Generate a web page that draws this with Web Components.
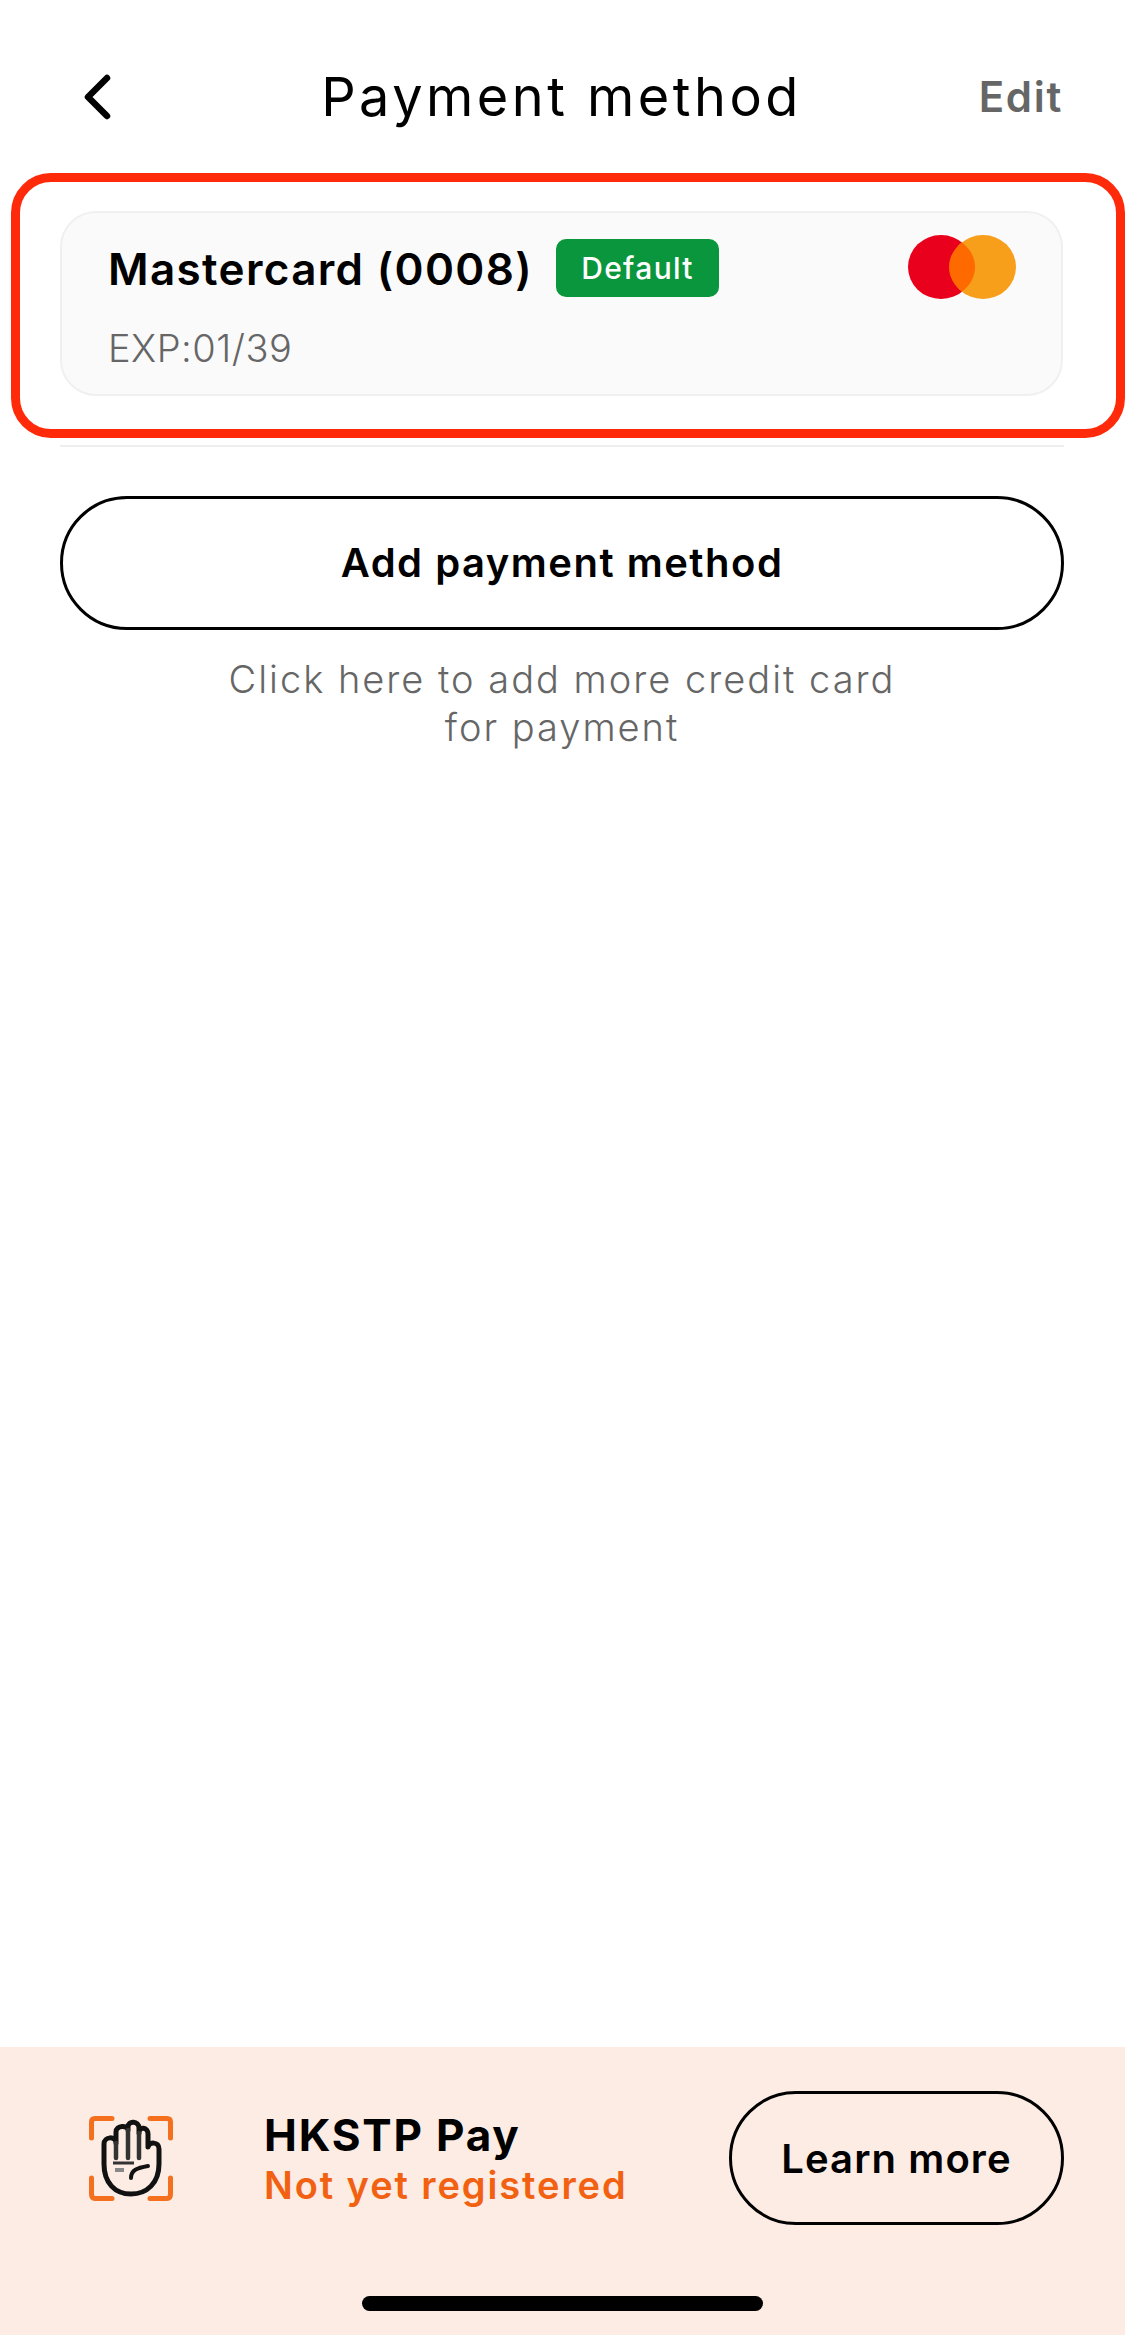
<!DOCTYPE html>
<html>
<head>
<meta charset="utf-8">
<title>Payment method</title>
<style>
  html, body { margin: 0; padding: 0; background: #fff; }
  body { font-family: Inter, "Liberation Sans", sans-serif; color: #000; }
</style>
</head>
<body>
<payment-screen>
  <nav-header title-text="Payment method" action="Edit"></nav-header>
  <highlight-frame>
    <card-item name="Mastercard (0008)" badge="Default" exp="EXP:01/39"></card-item>
  </highlight-frame>
  <add-method label="Add payment method">Click here to add more credit card<br>for payment</add-method>
  <pay-banner slot="footer" heading="HKSTP Pay" status="Not yet registered" action="Learn more"></pay-banner>
</payment-screen>

<script>
// small helper so every element gets the same open shadow root setup
const shadow = (el, html) => {
    el.attachShadow({ mode: 'open' }).innerHTML = html;
};

class PaymentScreen extends HTMLElement {
    constructor() {
        super();
        shadow(this, `
<style>
    :host { display: flex; flex-direction: column; width: 1125px; height: 2335px; overflow: hidden; background: #fff; }
    main { flex: 1; }
</style>
<main><slot></slot></main>
<slot name="footer"></slot>`);
    }
}

class NavHeader extends HTMLElement {
    connectedCallback() {
        shadow(this, `
<style>
    :host { display: grid; grid-template-columns: 1fr auto 1fr; align-items: center; height: 60px; padding: 67px 62px 46px 60px; }
    svg { display: block; margin-left: 22px; }
    h1 { margin: 0; font-size: 54px; line-height: 60px; font-weight: 400; letter-spacing: 3.5px; color: #000; white-space: nowrap; }
    span { justify-self: end; font-size: 42px; line-height: 60px; font-weight: 600; letter-spacing: 1.7px; color: #666; }
</style>
<svg width="30" height="48" viewBox="0 0 30 48" fill="none"><path d="M25 5 L6 24 L25 43" stroke="#000" stroke-width="6.5" stroke-linecap="round" stroke-linejoin="round"/></svg>
<h1>${this.getAttribute('title-text')}</h1>
<span>${this.getAttribute('action')}</span>`);
    }
}

class HighlightFrame extends HTMLElement {
    constructor() {
        super();
        shadow(this, `
<style>
    :host { display: block; margin-left: 11px; width: 1114px; box-sizing: border-box; padding: 29px 53px 33px 40px; border: 9px solid #ff2a0a; border-radius: 40px; }
</style>
<slot></slot>`);
    }
}

class CardItem extends HTMLElement {
    connectedCallback() {
        shadow(this, `
<style>
    :host { display: block; box-sizing: border-box; height: 185px; background: #fafafa; border: 2px solid #f0f0f0; border-radius: 36px; padding: 22px 45px 0 46px; }
    .top { display: flex; align-items: flex-start; }
    .name { font-size: 44px; line-height: 68px; font-weight: 600; white-space: nowrap; letter-spacing: 1.35px; }
    .badge { margin: 4px 0 0 23px; width: 163px; height: 58px; box-sizing: border-box; display: flex; align-items: center; justify-content: center; background: #0a963c; color: #fff; border-radius: 10px; font-size: 30px; font-weight: 500; letter-spacing: 1.3px; }
    svg { display: block; margin-left: auto; }
    .exp { font-size: 38px; line-height: 44px; color: #666; font-weight: 300; letter-spacing: 0.5px; margin-top: 23px; }
</style>
<div class="top">
    <span class="name">${this.getAttribute('name')}</span>
    <span class="badge">${this.getAttribute('badge')}</span>
    <svg width="108" height="64" viewBox="0 0 108 64">
        <ellipse cx="33" cy="32" rx="33" ry="32" fill="#e8001c"/>
        <ellipse cx="75" cy="32" rx="33" ry="32" fill="#f79e1b"/>
        <path d="M54 7.5 C46 13.5 41 22 41 32 C41 42 46 50.5 54 56.5 C62 50.5 67 42 67 32 C67 22 62 13.5 54 7.5 Z" fill="#ff6a00"/>
    </svg>
</div>
<div class="exp">${this.getAttribute('exp')}</div>`);
    }
}

class AddMethod extends HTMLElement {
    connectedCallback() {
        shadow(this, `
<style>
    :host { display: block; margin-top: 7px; padding: 0 61px 0 60px; }
    .rule { height: 2px; background: #eeeeee; }
    button { display: block; width: 100%; height: 134px; margin-top: 49px; box-sizing: border-box; background: #fff; border: 3px solid #000; border-radius: 67px; font: 600 40px Inter, "Liberation Sans", sans-serif; letter-spacing: 1.5px; color: #000; padding: 0 0 2px; }
    p { margin: 25px 0 0; text-align: center; font-size: 38px; line-height: 48px; font-weight: 300; letter-spacing: 2px; color: #666; }
</style>
<div class="rule"></div>
<button>${this.getAttribute('label')}</button>
<p><slot></slot></p>`);
    }
}

class PayBanner extends HTMLElement {
    connectedCallback() {
        shadow(this, `
<style>
    :host { display: block; height: 288px; box-sizing: border-box; background: #fdece4; padding: 44px 61px 0 89px; position: relative; }
    .row { display: flex; align-items: center; height: 134px; }
    svg { display: block; flex: none; }
    .text { margin-left: 91px; padding-top: 3px; }
    .head { font-size: 44px; line-height: 50px; font-weight: 700; letter-spacing: 1.8px; color: #000; }
    .status { font-size: 38px; line-height: 50px; font-weight: 600; letter-spacing: 1.9px; color: #f26111; white-space: nowrap; }
    button { margin-left: auto; width: 335px; height: 134px; flex: none; box-sizing: border-box; background: transparent; border: 3px solid #000; border-radius: 67px; font: 600 40px Inter, "Liberation Sans", sans-serif; letter-spacing: 1.1px; color: #000; padding: 0; }
    .home { position: absolute; left: 362px; top: 249px; width: 401px; height: 15px; background: #000; border-radius: 8px; }
</style>
<div class="row">
    <svg width="84" height="85" viewBox="0 0 84 85" fill="none">
        <path d="M2.5 22 V6 Q2.5 2.5 6 2.5 H23 M61 2.5 H78 Q81.5 2.5 81.5 6 V22 M2.5 62 V78 Q2.5 82.5 6 82.5 H23 M61 82.5 H78 Q81.5 82.5 81.5 78 V62" stroke="#f4701f" stroke-width="5" stroke-linecap="round"/>
        <path d="M15 48 V28 C15 20 27 20 27 27 V16 C27 9 39 9 39 14 V11 C39 4 50 5 50 12 V17 C50 10 59 11 59 18 V31 C60 26 70 25 70 33 V48 C70 67 58 78 42 78 C26 78 15 67 15 48 Z" stroke="#111" stroke-width="5" stroke-linejoin="round"/>
        <path d="M27 27 V42 M39 14 V42 M50 17 V42" stroke="#333" stroke-width="4.5" stroke-linecap="round"/>
        <path d="M24 47 H45" stroke="#333" stroke-width="3"/>
        <path d="M26 54 H35" stroke="#888" stroke-width="4"/>
        <path d="M42 62 C42 54 48 52 59 50" stroke="#111" stroke-width="4" stroke-linecap="round"/>
    </svg>
    <div class="text">
        <div class="head">${this.getAttribute('heading')}</div>
        <div class="status">${this.getAttribute('status')}</div>
    </div>
    <button>${this.getAttribute('action')}</button>
</div>
<div class="home"></div>`);
    }
}

customElements.define('payment-screen', PaymentScreen);
customElements.define('nav-header', NavHeader);
customElements.define('highlight-frame', HighlightFrame);
customElements.define('card-item', CardItem);
customElements.define('add-method', AddMethod);
customElements.define('pay-banner', PayBanner);
</script>
</body>
</html>
